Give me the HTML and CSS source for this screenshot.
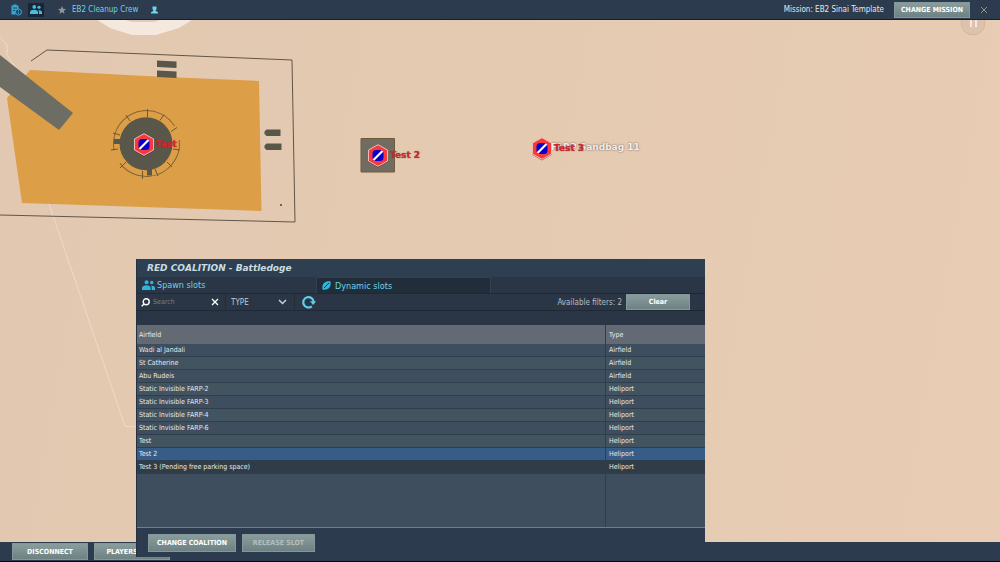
FILE: index.html
```html
<!DOCTYPE html>
<html lang="en">

<head>
  <meta charset="UTF-8">
  <meta name="viewport" content="width=device-width, initial-scale=1.0">
  <title>EB2 Cleanup Crew</title>
  <link rel="stylesheet" href="styles.css">
</head>

<body>
  <svg class="symbols">
    <symbol id="people" viewBox="0 0 24 18">
      <circle cx="8.500" cy="3.800" r="3.700" />
      <circle cx="18" cy="4.500" r="3.200" />
      <path d="M0 18v-3.500c0-3.500 4-5 8-5s8 1.500 8 5V18z" />
      <path d="M18 18v-4c0-1.500-.7-2.500-1.500-3.500 3.800-.5 7.500.8 7.500 4V18z" />
    </symbol>
    <symbol id="pin" viewBox="0 0 22 24">
      <path d="M11 2l9.500 5v11L11 23.500 1.500 18V7z" fill="#6b2226" opacity=".6" />
      <path d="M11 .7l9.500 5.300v11L11 22.300 1.500 17V6z" fill="#fa373c" stroke="#f3bcb0" stroke-width="1" />
      <rect x="5.500" y="6" width="11" height="11" rx="3.500" fill="#0800c8" />
      <path d="M6.500 16l9-9" stroke="#fff" stroke-width="2.200" />
    </symbol>
  </svg>

  <header class="topbar">
    <button class="icon-btn" aria-label="Briefing">
      <svg width="11" height="12" viewBox="0 0 22 24">
        <path fill="#36a9d6" d="M1 3h4V1h6v2h4v7a7 7 0 0 0-5 11H1zM4 7v2h8V7zM4 12v2h4v-2z" />
        <circle cx="15" cy="16" r="6" fill="#2c3b4d" stroke="#36a9d6" stroke-width="2" />
        <path stroke="#36a9d6" stroke-width="2" d="M15 12v2M15 15.500v4" />
      </svg>
    </button>
    <button class="icon-btn active" aria-label="Slots">
      <svg width="12" height="9"><use href="#people" /></svg>
    </button>
    <svg class="star" width="8" height="8" viewBox="0 0 24 24">
      <path d="M12 0l3.500 8.200 8.500.8-6.500 5.800 2 8.700-7.500-4.600-7.500 4.600 2-8.700L0 9l8.500-.8z" />
    </svg>
    <span class="server">EB2 Cleanup Crew</span>
    <svg class="user" width="7" height="8" viewBox="0 0 14 16">
      <path d="M3 1h8v5L9 9.500l5 3V15H0v-2.500l5-3L3 6z" />
    </svg>
    <span class="mission">Mission: EB2 Sinai Template</span>
    <button class="btn change-mission">CHANGE MISSION</button>
    <button class="close" aria-label="Close">
      <svg width="8" height="8" viewBox="0 0 8 8"><path d="M1 1l6 6M7 1l-6 6" /></svg>
    </button>
  </header>

  <main class="map">
    <svg class="terrain" width="1000" height="522" viewBox="0 20 1000 522">
      <path fill="#f4e8df" d="M97 20l13 8 22 7h24l23-7 13-8z" />
      <path fill="#e5cbb5" d="M125 20l7 2h22l6-2z" />
      <path fill="none" stroke="#eedbc4" d="M0 37l7 8v10l22 32 20 117 76 222 12 1" />
      <path fill="#dd9e48" d="M30 70l136 7 93 4 2.500 130L22 203 7 98z" />
      <path fill="#6e6d63" d="M0 55l73 58-14 17L0 87z" />
      <path fill="none" stroke="#625546" d="M31 61l16-11 245 10 3 162-295-7" />
      <path fill="#58574a" d="M157 60.500l19.500 1v6.500l-19.500-1zM157 70.500l19.500 1v6.500l-19.500-1zM264.500 131.500l2-2h14v6.500h-14l-2-2zM264.500 145.500l2-2h15v6.500h-15l-2-2z" />
      <circle cx="281" cy="205" r="1" fill="#4e4233" />
      <circle cx="146.500" cy="143.500" r="33" fill="none" stroke="#846537" stroke-dasharray="86 14 10 0 82 16" transform="rotate(-6 146.500 143.500)" />
      <path stroke="#6c5735" d="M147.500 109v8M164 114.500l-4 6M177 127.500l-6 4M180 150l-7-1M172 167l-5-5M158 176l-3-7M142.500 179v-8M120 168l6-6M111 150l7-1M113 133l7 2M126 115l4 6" />
      <circle cx="146" cy="143.700" r="26.500" fill="#58574a" />
      <path fill="#58574a" d="M114 139h8v5h-8zM147 168h5v7.500h-5z" />
      <path fill="#716c62" stroke="#705a39" d="M361 138.500h33.500V172H361z" />
    </svg>

    <div class="pin pin-1">
      <svg width="22" height="24"><use href="#pin" /></svg>
      <span>Test</span>
    </div>
    <div class="pin pin-2">
      <svg width="22" height="24"><use href="#pin" /></svg>
      <span>Test 2</span>
    </div>
    <div class="static-label">FARP Sandbag 11</div>
    <div class="pin pin-3">
      <svg width="22" height="24"><use href="#pin" /></svg>
      <span>Test 3</span>
    </div>
    <svg class="pause" width="26" height="26" viewBox="0 0 26 26">
      <circle cx="13" cy="13" r="12" fill="#9b8577" fill-opacity=".12" stroke="#c8a78e" stroke-opacity=".45" />
      <path stroke="#f4e8df" stroke-width="2" d="M11 9v8M16 9v8" />
    </svg>
  </main>

  <footer class="bottombar">
    <button class="btn disconnect">DISCONNECT</button>
    <button class="btn players">PLAYERS</button>
  </footer>

  <section class="panel">
    <h1>RED COALITION - Battledoge</h1>
    <nav class="tabs">
      <button class="tab">
        <svg width="13" height="10"><use href="#people" /></svg>
        Spawn slots
      </button>
      <button class="tab active">
        <svg width="9" height="9" viewBox="0 0 18 18">
          <path d="M1 17c-1-5 0-10 3-13S12 0 17 1c1 5 0 10-3 13S6 18 1 17z" />
          <path class="slash" d="M4 14L14 4" />
        </svg>
        Dynamic slots
      </button>
    </nav>
    <div class="filters">
      <label class="search" for="search">
        <svg width="9" height="9" viewBox="0 0 9 9"><circle cx="5.200" cy="3.800" r="3" /><path d="M3 6L.7 8.300" /></svg>
      </label>
      <input id="search" type="text" placeholder="Search">
      <button class="clear-search" aria-label="Clear search">
        <svg width="8" height="8" viewBox="0 0 8 8"><path d="M1 1l6 6M7 1l-6 6" /></svg>
      </button>
      <div class="type">
        <select aria-label="Type">
          <option>TYPE</option>
        </select>
        <svg width="9" height="6" viewBox="0 0 9 6"><path d="M1 1l3.500 3.500L8 1" /></svg>
      </div>
      <button class="refresh" aria-label="Refresh">
        <svg width="14" height="14" viewBox="0 0 14 14">
          <path class="arc" d="M9.800 11.300A5.200 5.200 0 1 1 11.700 7" />
          <path class="tip" d="M8 6.300h6L11.200 10z" />
        </svg>
      </button>
      <span class="available">Available filters: 2</span>
      <button class="btn clear">Clear</button>
    </div>
    <div class="list">
      <table>
        <thead>
          <tr><th>Airfield</th><th class="col-type">Type</th></tr>
        </thead>
        <tbody>
          <tr><td>Wadi al Jandali</td><td>Airfield</td></tr>
          <tr><td>St Catherine</td><td>Airfield</td></tr>
          <tr><td>Abu Rudeis</td><td>Airfield</td></tr>
          <tr><td>Static Invisible FARP-2</td><td>Heliport</td></tr>
          <tr><td>Static Invisible FARP-3</td><td>Heliport</td></tr>
          <tr><td>Static Invisible FARP-4</td><td>Heliport</td></tr>
          <tr><td>Static Invisible FARP-6</td><td>Heliport</td></tr>
          <tr><td>Test</td><td>Heliport</td></tr>
          <tr class="selected"><td>Test 2</td><td>Heliport</td></tr>
          <tr class="pending"><td>Test 3 (Pending free parking space)</td><td>Heliport</td></tr>
        </tbody>
      </table>
      <div class="rest"></div>
    </div>
    <div class="actions">
      <button class="btn coalition">CHANGE COALITION</button>
      <button class="btn release" disabled>RELEASE SLOT</button>
    </div>
  </section>
</body>

</html>
```
FILE: styles.css
```css
* {
  margin: 0;
  padding: 0;
  box-sizing: border-box;
}

body {
  position: relative;
  display: flex;
  flex-direction: column;
  height: 100vh;
  overflow: hidden;
  background-color: #2c3b4d;
  font-family: "DejaVu Sans Condensed", "DejaVu Sans", sans-serif;
  font-size: 8px;
  color: #e4eaee;
}

button,
input,
select {
  border: none;
  background: none;
  font-family: inherit;
  font-size: 8px;
  color: inherit;
}

svg {
  flex: none;
  display: block;
}

.symbols {
  position: absolute;
  width: 0;
  height: 0;
}

.btn {
  flex: none;
  height: 16px;
  border: 1px solid #84979a;
  background: linear-gradient(#8a9d9d, #6e8283);
  font-size: 7px;
  font-weight: bold;
  color: #fff;
  text-align: center;
}

.btn:disabled {
  color: #b4bebe;
}

/* top bar */
.topbar {
  flex: none;
  display: flex;
  align-items: center;
  height: 20px;
  padding: 0 12px 0 8px;
  border-bottom: 1px solid #1a1a2a;
}

.icon-btn {
  display: flex;
  align-items: center;
  justify-content: center;
  width: 16px;
  height: 14px;
  margin-right: 4px;
  fill: #45bfe0;
}

.icon-btn.active {
  background-color: #1a2635;
}

.star {
  margin: 0 6px 0 10px;
  fill: #8f9296;
}

.server {
  color: #6fd2ea;
}

.user {
  margin-left: 13px;
  fill: #65d8ee;
}

.mission {
  margin-left: auto;
}

.change-mission {
  width: 76px;
  margin: 0 10px;
}

.close {
  stroke: #9a918c;
}

/* map */
.map {
  flex: 1;
  position: relative;
  overflow: hidden;
  background: linear-gradient(100deg, #e2c8b0, #e5cab2 45%, #e8ccb4);
}

.terrain {
  position: absolute;
  top: 0;
  left: 0;
}

.pin {
  position: absolute;
  display: flex;
  align-items: center;
  gap: 1px;
  font-family: "DejaVu Sans", sans-serif;
  font-size: 9px;
  font-weight: bold;
  color: #cc2c32;
  text-shadow: 0 0 1px #7a2a28;
  white-space: nowrap;
}

.pin span {
  padding-bottom: 2px;
}

.pin-1 {
  top: 113px;
  left: 133px;
}

.pin-2 {
  top: 124px;
  left: 367px;
}

.pin-3 {
  top: 117px;
  left: 531px;
}

.static-label {
  position: absolute;
  top: 122px;
  left: 551px;
  font-family: "DejaVu Sans", sans-serif;
  font-size: 9px;
  font-weight: bold;
  color: #f2eeea;
  text-shadow: 0 0 2px #5c5048;
}

.pause {
  position: absolute;
  top: -10px;
  right: 14px;
}

/* bottom bar */
.bottombar {
  flex: none;
  display: flex;
  gap: 6px;
  height: 20px;
  padding: 1px 12px;
  border-bottom: 1px solid #05080f;
}

.bottombar .btn {
  width: 76px;
  height: 17px;
}

.bottombar .players {
  padding-right: 20px;
}

/* slots window */
.panel {
  position: absolute;
  top: 259px;
  left: 136px;
  display: flex;
  flex-direction: column;
  width: 569px;
  height: 298px;
  border-left: 1px solid #243140;
  background-color: #2c3b4d;
}

.panel h1 {
  height: 18px;
  padding-left: 10px;
  background-color: #2d3f50;
  font-family: "DejaVu Sans", sans-serif;
  font-size: 9px;
  font-style: italic;
  line-height: 18px;
  color: #c8dce0;
}

.tabs {
  display: flex;
  height: 16px;
  background-color: #2a3645;
}

.tab {
  display: flex;
  align-items: center;
  gap: 2px;
  width: 179px;
  padding-left: 5px;
  font-size: 9px;
  color: #6fd2ea;
  fill: #2fb4dc;
}

.tab.active {
  gap: 4px;
  width: 175px;
  border: 1px solid #33404f;
  border-bottom: none;
  background-color: #222d3a;
}

.slash {
  stroke: #222d3a;
  stroke-width: 2;
}

.filters {
  display: flex;
  align-items: center;
  height: 18px;
  padding-right: 15px;
  border-top: 1px solid #1f2935;
  border-bottom: 1px solid #1f2935;
  background-color: #2a3645;
}

.search {
  padding: 0 3px 0 4px;
  fill: none;
  stroke: #fff;
  stroke-width: 1.4;
}

.filters input {
  width: 56px;
  font-size: 7px;
}

.filters input::placeholder {
  color: #75808a;
}

.clear-search {
  width: 14px;
  padding-left: 2px;
  stroke: #fff;
  stroke-width: 1.3;
}

.type {
  position: relative;
  display: flex;
  align-items: center;
  width: 70px;
  height: 16px;
  margin-left: 2px;
  border-left: 1px solid #222d3a;
  border-right: 1px solid #222d3a;
}

.type select {
  appearance: none;
  width: 100%;
  padding-left: 5px;
  color: #c0cad2;
}

.type svg {
  position: absolute;
  right: 7px;
  fill: none;
  stroke: #c5d0d6;
  stroke-width: 1.5;
  pointer-events: none;
}

.refresh {
  margin-left: 7px;
}

.arc {
  fill: none;
  stroke: #60d0ea;
  stroke-width: 2.2;
}

.tip {
  fill: #60d0ea;
}

.available {
  margin-left: auto;
  color: #b4bec6;
}

.clear {
  width: 64px;
  margin-left: 4px;
}

.list {
  flex: 1;
  display: flex;
  flex-direction: column;
  padding-top: 14px;
  border-bottom: 1px solid #6d8088;
  background-color: #2a3645;
}

table {
  width: 100%;
  border-collapse: separate;
  border-spacing: 0;
  table-layout: fixed;
  font-size: 7px;
}

th,
td {
  height: 13px;
  padding-left: 2px;
  border-bottom: 1px solid #2f3e4c;
  line-height: 12px;
  text-align: left;
}

th {
  height: 19px;
  border-bottom: none;
  background-color: #646a74;
  font-weight: normal;
}

.col-type {
  width: 100px;
}

th + th,
td + td {
  padding-left: 3px;
  border-left: 1px solid #2f3e4c;
}

tbody tr {
  background-color: #3e4e5e;
}

tbody tr:nth-child(even) {
  background-color: #435461;
}

tbody .selected {
  background-color: #385c88;
}

tbody tr.pending {
  background-color: #303d48;
}

/* empty part of the list keeps the column line */
.rest {
  flex: 1;
  background: linear-gradient(#2f3e4c, #2f3e4c) right 99px top / 1px 100% no-repeat #3e4e5e;
}

.actions {
  display: flex;
  align-items: center;
  gap: 6px;
  height: 29px;
  padding-left: 11px;
}

.actions .btn {
  height: 18px;
}

.coalition {
  width: 88px;
}

.release {
  width: 73px;
}
```
